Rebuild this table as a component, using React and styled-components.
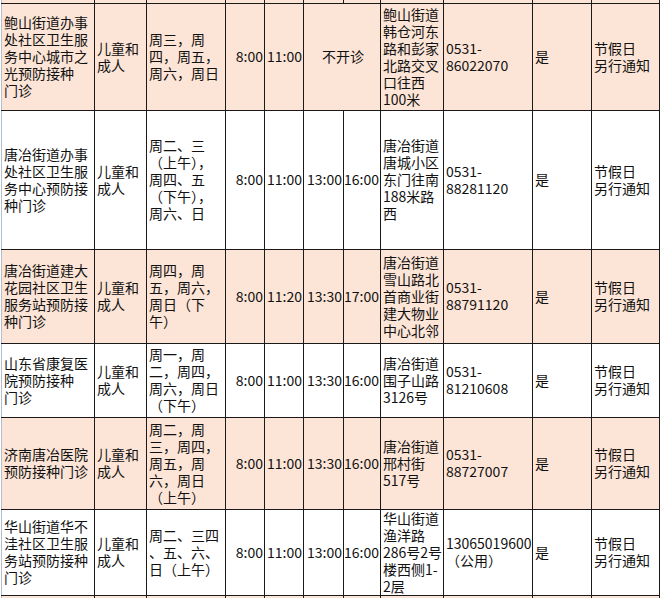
import React from 'react';
import styled, { createGlobalStyle } from 'styled-components';

const GlobalStyle = createGlobalStyle`
  html, body {
    margin: 0;
    padding: 0;
    background: #fff;
    overflow: hidden;
  }
  body {
    font-family: "Noto Sans CJK SC", "Liberation Sans", sans-serif;
    color: #111;
  }
`;

const Page = styled.div`
  width: 664px;
  height: 598px;
  overflow: hidden;
  padding-left: 1px;
  box-sizing: border-box;
`;

const Sheet = styled.table`
  border-collapse: collapse;
  table-layout: fixed;
  width: 659px;
  font-size: 14px;
  line-height: 17px;
  tr:first-child td {
    border-top: none;
  }
`;

const Row = styled.tr`
  height: ${(p) => p.$height}px;
  background: ${(p) => (p.$shaded ? '#fce4d6' : '#fff')};
`;

const Cell = styled.td`
  border: 1px solid #1a1a1a;
  padding: ${(p) => (p.$align === 'right' ? '0 1px 0 0' : '0 0 0 2px')};
  text-align: ${(p) => p.$align || 'left'};
  vertical-align: middle;
  white-space: nowrap;
  overflow: hidden;
  &:first-child {
    border-left-color: #b4bfcf;
  }
`;

const columns = [93, 52, 79, 39, 39, 40, 37, 63, 89, 59, 68];

const clinics = [
  {
    height: 107,
    name: ['鲍山街道办事', '处社区卫生服', '务中心城市之', '光预防接种', '门诊'],
    days: ['周三，周', '四，周五，', '周六，周日'],
    times: ['8:00', '11:00'],
    closed: true,
    address: ['鲍山街道', '韩仓河东', '路和彭家', '北路交叉', '口往西', '100米'],
    phone: ['0531-', '86022070'],
  },
  {
    height: 139,
    name: ['唐冶街道办事', '处社区卫生服', '务中心预防接', '种门诊'],
    days: ['周二、三', '（上午），', '周四、五', '（下午），', '周六、日'],
    times: ['8:00', '11:00', '13:00', '16:00'],
    address: ['唐冶街道', '唐城小区', '东门往南', '188米路', '西'],
    phone: ['0531-', '88281120'],
  },
  {
    height: 94,
    name: ['唐冶街道建大', '花园社区卫生', '服务站预防接', '种门诊'],
    days: ['周四，周', '五，周六，', '周日（下', '午）'],
    times: ['8:00', '11:20', '13:30', '17:00'],
    address: ['唐冶街道', '雪山路北', '首商业街', '建大物业', '中心北邻'],
    phone: ['0531-', '88791120'],
  },
  {
    height: 74,
    name: ['山东省康复医', '院预防接种', '门诊'],
    days: ['周一，周', '二，周四，', '周六，周日', '（下午）'],
    times: ['8:00', '11:00', '13:30', '16:00'],
    address: ['唐冶街道', '围子山路', '3126号'],
    phone: ['0531-', '81210608'],
  },
  {
    height: 92,
    name: ['济南唐冶医院', '预防接种门诊'],
    days: ['周二，周', '三，周四，', '周五，周', '六，周日', '（上午）'],
    times: ['8:00', '11:00', '13:30', '16:00'],
    address: ['唐冶街道', '邢村街', '517号'],
    phone: ['0531-', '88727007'],
  },
  {
    height: 86,
    name: ['华山街道华不', '洼社区卫生服', '务站预防接种', '门诊'],
    days: ['周二、三四', '、五、六、', '日（上午）'],
    times: ['8:00', '11:00', '13:00', '16:00'],
    address: ['华山街道', '渔洋路', '286号2号', '楼西侧1-', '2层'],
    phone: ['13065019600', '（公用）'],
  },
];

const Lines = ({ items }) =>
  items.map((line, i) => (
    <React.Fragment key={i}>
      {i > 0 && <br />}
      {line}
    </React.Fragment>
  ));

const EmptyRow = ({ height, shaded }) => (
  <Row $height={height} $shaded={shaded}>
    {columns.map((w, i) => (
      <Cell key={i} />
    ))}
  </Row>
);

const App = () => {
  return (
    <>
      <GlobalStyle />
      <Page>
        <Sheet>
          <colgroup>
            {columns.map((w, i) => (
              <col key={i} style={{ width: w }} />
            ))}
          </colgroup>
          <tbody>
            <EmptyRow height={3} shaded />
            {clinics.map((c, idx) => (
              <Row key={idx} $height={c.height} $shaded={idx % 2 === 0}>
                <Cell>
                  <Lines items={c.name} />
                </Cell>
                <Cell>
                  <Lines items={['儿童和', '成人']} />
                </Cell>
                <Cell>
                  <Lines items={c.days} />
                </Cell>
                {c.times.map((t) => (
                  <Cell key={t} $align="right">
                    {t}
                  </Cell>
                ))}
                {c.closed && (
                  <Cell colSpan={2} $align="center">
                    不开诊
                  </Cell>
                )}
                <Cell>
                  <Lines items={c.address} />
                </Cell>
                <Cell>
                  <Lines items={c.phone} />
                </Cell>
                <Cell>是</Cell>
                <Cell>
                  <Lines items={['节假日', '另行通知']} />
                </Cell>
              </Row>
            ))}
            <EmptyRow height={40} shaded />
          </tbody>
        </Sheet>
      </Page>
    </>
  );
};

export default App;
